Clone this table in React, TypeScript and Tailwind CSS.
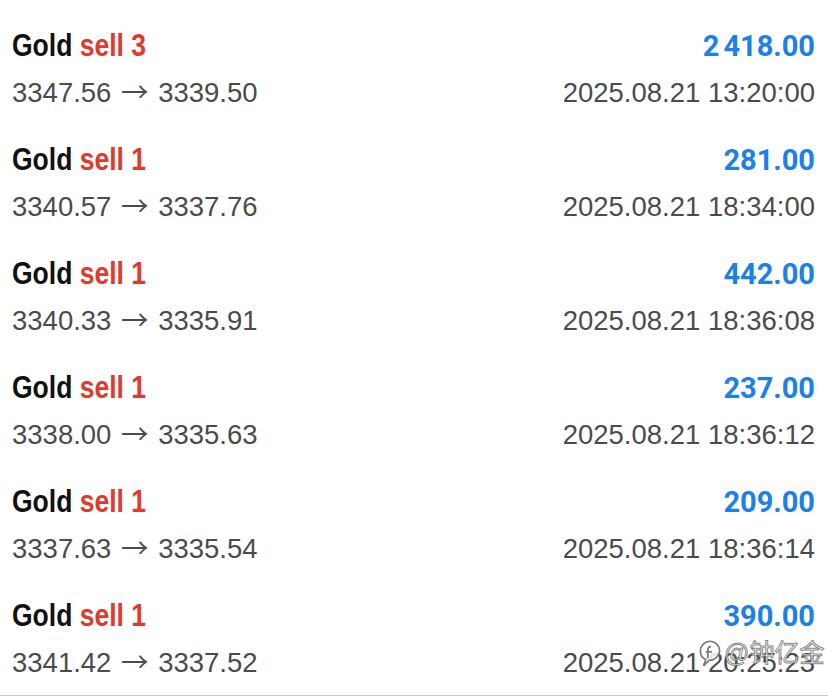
import React from "react";

const rows = [
  { n: 3, a: "2", b: "418.00", from: "3347.56", to: "3339.50", time: "2025.08.21 13:20:00" },
  { n: 1, a: "", b: "281.00", from: "3340.57", to: "3337.76", time: "2025.08.21 18:34:00" },
  { n: 1, a: "", b: "442.00", from: "3340.33", to: "3335.91", time: "2025.08.21 18:36:08" },
  { n: 1, a: "", b: "237.00", from: "3338.00", to: "3335.63", time: "2025.08.21 18:36:12" },
  { n: 1, a: "", b: "209.00", from: "3337.63", to: "3335.54", time: "2025.08.21 18:36:14" },
  { n: 1, a: "", b: "390.00", from: "3341.42", to: "3337.52", time: "2025.08.21 20:25:23" },
];

export default function App() {
  return (
    <div className="relative w-[828px] h-[698px] bg-white overflow-hidden">
      <div className="pt-[11px]">
        {rows.map((r, i) => (
          <div
            key={i}
            className={
              "pl-[12px] pr-[13px] pt-[17px] pb-[16px]" +
              (i === rows.length - 1 ? " border-b border-[#c8c8c8]" : "")
            }
          >
            <div className="flex items-baseline justify-between h-[36px] leading-[36px]">
              <div className="inline-block origin-left scale-x-[0.855] whitespace-nowrap font-['Liberation_Sans',sans-serif] font-bold text-[31px] text-[#111111]">
                Gold <span className="text-[#e0392e]">sell {r.n}</span>
              </div>
              <div className="font-['Roboto',sans-serif] font-bold text-[29px] text-[#1c80ea] whitespace-nowrap">
                {r.a && <span className="mr-[4px]">{r.a}</span>}
                {r.b}
              </div>
            </div>
            <div className="mt-[13px] flex items-baseline justify-between h-[32px] leading-[32px] font-['Liberation_Sans',sans-serif] text-[27.5px] text-[#4b4b4d] whitespace-nowrap">
              <div>
                {r.from}{" "}
                <span className="mx-[2px] leading-[0px] font-['Noto_Sans_CJK_SC',sans-serif]">→</span>{" "}
                {r.to}
              </div>
              <div>{r.time}</div>
            </div>
          </div>
        ))}
      </div>
      <div className="absolute left-[697px] top-[637px] flex items-center gap-[1px]">
        <svg width="26" height="32" viewBox="0 0 24 30" fill="none" stroke="#7a7a7a" strokeWidth="1.6">
          <path d="M12 4c-5 0-9 4-9 9 0 4 2 7 5 8l-2 6 5-5c5 0 10-4 10-9 0-5-4-9-9-9z" fill="rgba(255,255,255,0.85)" />
          <path d="M13 9c-2 0-3 1-3 3v8M8 14h6" />
        </svg>
        <span className="font-['Liberation_Sans','Noto_Sans_CJK_SC',sans-serif] text-[25px] leading-[30px] text-[rgba(255,255,255,0.9)] [-webkit-text-stroke:1px_rgba(80,80,80,0.7)]">
          @钟亿金
        </span>
      </div>
    </div>
  );
}
